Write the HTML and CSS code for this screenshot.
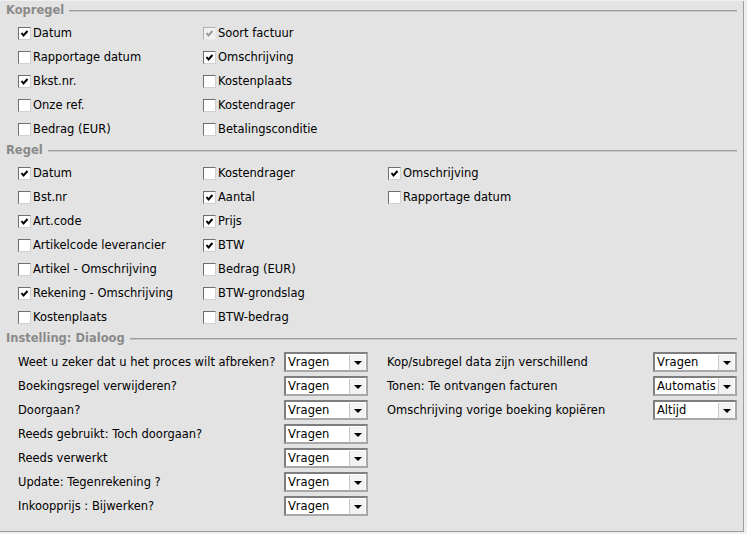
FILE: index.html
```html
<!DOCTYPE html>
<html>
<head>
<meta charset="utf-8">
<link rel="stylesheet" href="styles.css">
</head>
<body>
<div class="panel">
  <div class="section">
    <div class="heading"><span class="title">Kopregel</span><span class="rule"></span></div>
    <div class="checks cols2">
      <div class="col">
        <label class="cb"><span class="box on"><svg viewBox="0 0 11 11"><path d="M2.5 5 L4.5 7.5 L8.5 3"/></svg></span>Datum</label>
        <label class="cb"><span class="box"></span>Rapportage datum</label>
        <label class="cb"><span class="box on"><svg viewBox="0 0 11 11"><path d="M2.5 5 L4.5 7.5 L8.5 3"/></svg></span>Bkst.nr.</label>
        <label class="cb"><span class="box"></span>Onze ref.</label>
        <label class="cb"><span class="box"></span>Bedrag (EUR)</label>
      </div>
      <div class="col">
        <label class="cb"><span class="box on disabled"><svg viewBox="0 0 11 11"><path d="M2.5 5 L4.5 7.5 L8.5 3"/></svg></span>Soort factuur</label>
        <label class="cb"><span class="box on"><svg viewBox="0 0 11 11"><path d="M2.5 5 L4.5 7.5 L8.5 3"/></svg></span>Omschrijving</label>
        <label class="cb"><span class="box"></span>Kostenplaats</label>
        <label class="cb"><span class="box"></span>Kostendrager</label>
        <label class="cb"><span class="box"></span>Betalingsconditie</label>
      </div>
    </div>
  </div>
  <div class="section">
    <div class="heading"><span class="title">Regel</span><span class="rule"></span></div>
    <div class="checks">
      <div class="col">
        <label class="cb"><span class="box on"><svg viewBox="0 0 11 11"><path d="M2.5 5 L4.5 7.5 L8.5 3"/></svg></span>Datum</label>
        <label class="cb"><span class="box"></span>Bst.nr</label>
        <label class="cb"><span class="box on"><svg viewBox="0 0 11 11"><path d="M2.5 5 L4.5 7.5 L8.5 3"/></svg></span>Art.code</label>
        <label class="cb"><span class="box"></span>Artikelcode leverancier</label>
        <label class="cb"><span class="box"></span>Artikel - Omschrijving</label>
        <label class="cb"><span class="box on"><svg viewBox="0 0 11 11"><path d="M2.5 5 L4.5 7.5 L8.5 3"/></svg></span>Rekening - Omschrijving</label>
        <label class="cb"><span class="box"></span>Kostenplaats</label>
      </div>
      <div class="col">
        <label class="cb"><span class="box"></span>Kostendrager</label>
        <label class="cb"><span class="box on"><svg viewBox="0 0 11 11"><path d="M2.5 5 L4.5 7.5 L8.5 3"/></svg></span>Aantal</label>
        <label class="cb"><span class="box on"><svg viewBox="0 0 11 11"><path d="M2.5 5 L4.5 7.5 L8.5 3"/></svg></span>Prijs</label>
        <label class="cb"><span class="box on"><svg viewBox="0 0 11 11"><path d="M2.5 5 L4.5 7.5 L8.5 3"/></svg></span>BTW</label>
        <label class="cb"><span class="box"></span>Bedrag (EUR)</label>
        <label class="cb"><span class="box"></span>BTW-grondslag</label>
        <label class="cb"><span class="box"></span>BTW-bedrag</label>
      </div>
      <div class="col">
        <label class="cb"><span class="box on"><svg viewBox="0 0 11 11"><path d="M2.5 5 L4.5 7.5 L8.5 3"/></svg></span>Omschrijving</label>
        <label class="cb"><span class="box"></span>Rapportage datum</label>
      </div>
    </div>
  </div>
  <div class="section">
    <div class="heading"><span class="title">Instelling: Dialoog</span><span class="rule"></span></div>
    <div class="dialog">
      <div class="dcol">
        <div class="drow"><span class="dlabel">Weet u zeker dat u het proces wilt afbreken?</span><span class="select"><span class="val">Vragen</span><span class="btn"><span class="arrow"></span></span></span></div>
        <div class="drow"><span class="dlabel">Boekingsregel verwijderen?</span><span class="select"><span class="val">Vragen</span><span class="btn"><span class="arrow"></span></span></span></div>
        <div class="drow"><span class="dlabel">Doorgaan?</span><span class="select"><span class="val">Vragen</span><span class="btn"><span class="arrow"></span></span></span></div>
        <div class="drow"><span class="dlabel">Reeds gebruikt: Toch doorgaan?</span><span class="select"><span class="val">Vragen</span><span class="btn"><span class="arrow"></span></span></span></div>
        <div class="drow"><span class="dlabel">Reeds verwerkt</span><span class="select"><span class="val">Vragen</span><span class="btn"><span class="arrow"></span></span></span></div>
        <div class="drow"><span class="dlabel">Update: Tegenrekening ?</span><span class="select"><span class="val">Vragen</span><span class="btn"><span class="arrow"></span></span></span></div>
        <div class="drow"><span class="dlabel">Inkoopprijs : Bijwerken?</span><span class="select"><span class="val">Vragen</span><span class="btn"><span class="arrow"></span></span></span></div>
      </div>
      <div class="dcol">
        <div class="drow"><span class="dlabel">Kop/subregel data zijn verschillend</span><span class="select"><span class="val">Vragen</span><span class="btn"><span class="arrow"></span></span></span></div>
        <div class="drow"><span class="dlabel">Tonen: Te ontvangen facturen</span><span class="select"><span class="val">Automatis</span><span class="btn"><span class="arrow"></span></span></span></div>
        <div class="drow"><span class="dlabel">Omschrijving vorige boeking kopiëren</span><span class="select"><span class="val">Altijd</span><span class="btn"><span class="arrow"></span></span></span></div>
      </div>
    </div>
  </div>
</div>
</body>
</html>
```

FILE: styles.css
```css
html, body {
  margin: 0;
  padding: 0;
  background: #f0f0f0;
}
body {
  font-family: "DejaVu Sans", Verdana, sans-serif;
  font-size: 11.5px;
  color: #000;
}
.panel {
  margin-top: 1px;
  width: 743px;
  height: 530px;
  background: #e3e3e3;
  border-right: 1px solid #9c9c9c;
  border-bottom: 1px solid #9c9c9c;
  box-sizing: content-box;
}
.heading {
  height: 17px;
  display: flex;
  align-items: center;
  padding-left: 6px;
  padding-right: 6px;
}
.title {
  font-weight: bold;
  color: #8a8a8a;
  white-space: nowrap;
}
.rule {
  flex: 1;
  margin-left: 5px;
  margin-top: 3px;
  border-top: 1px solid #9e9e9e;
  border-bottom: 1px solid #c4c4c4;
}
.checks {
  display: flex;
  padding: 3px 0 0 18px;
}
.col {
  width: 185px;
  flex-shrink: 0;
  display: flex;
  flex-direction: column;
}
.cb {
  height: 24px;
  display: flex;
  align-items: center;
  white-space: nowrap;
}
.box {
  width: 11px;
  height: 11px;
  background: #fff;
  border-top: 1px solid #6e6e6e;
  border-left: 1px solid #6e6e6e;
  border-right: 1px solid #d0d0d0;
  border-bottom: 1px solid #d0d0d0;
  margin-right: 2px;
  display: flex;
  flex-shrink: 0;
}
.box svg {
  width: 11px;
  height: 11px;
  display: none;
}
.box.on svg {
  display: block;
}
.box path {
  fill: none;
  stroke: #000;
  stroke-width: 2;
}
.box.disabled {
  background: #f0f0f0;
  border-color: #b0b0b0 #e8e8e8 #e8e8e8 #b0b0b0;
}
.box.disabled path {
  stroke: #9a9a9a;
}
.dialog {
  display: flex;
  padding: 4px 0 0 18px;
}
.dcol {
  width: 369px;
  flex-shrink: 0;
  display: flex;
  flex-direction: column;
}
.drow {
  height: 24px;
  display: flex;
  align-items: center;
}
.dlabel {
  width: 266px;
  flex-shrink: 0;
  white-space: nowrap;
}
.select {
  width: 80px;
  height: 16px;
  background: #fff;
  border: 2px solid;
  border-color: #7e7e7e #a8a8a8 #a8a8a8 #7e7e7e;
  display: flex;
  align-items: center;
  overflow: hidden;
}
.val {
  flex: 1;
  padding-left: 2px;
  white-space: nowrap;
  overflow: hidden;
}
.btn {
  width: 15px;
  height: 15px;
  margin-right: 1px;
  background: #f2f2f2;
  border-left: 1px solid #c8c8c8;
  display: flex;
  align-items: center;
  justify-content: center;
  flex-shrink: 0;
}
.arrow {
  width: 0;
  height: 0;
  border-left: 4px solid transparent;
  border-right: 4px solid transparent;
  border-top: 4px solid #000;
  margin-top: 1px;
}
```
